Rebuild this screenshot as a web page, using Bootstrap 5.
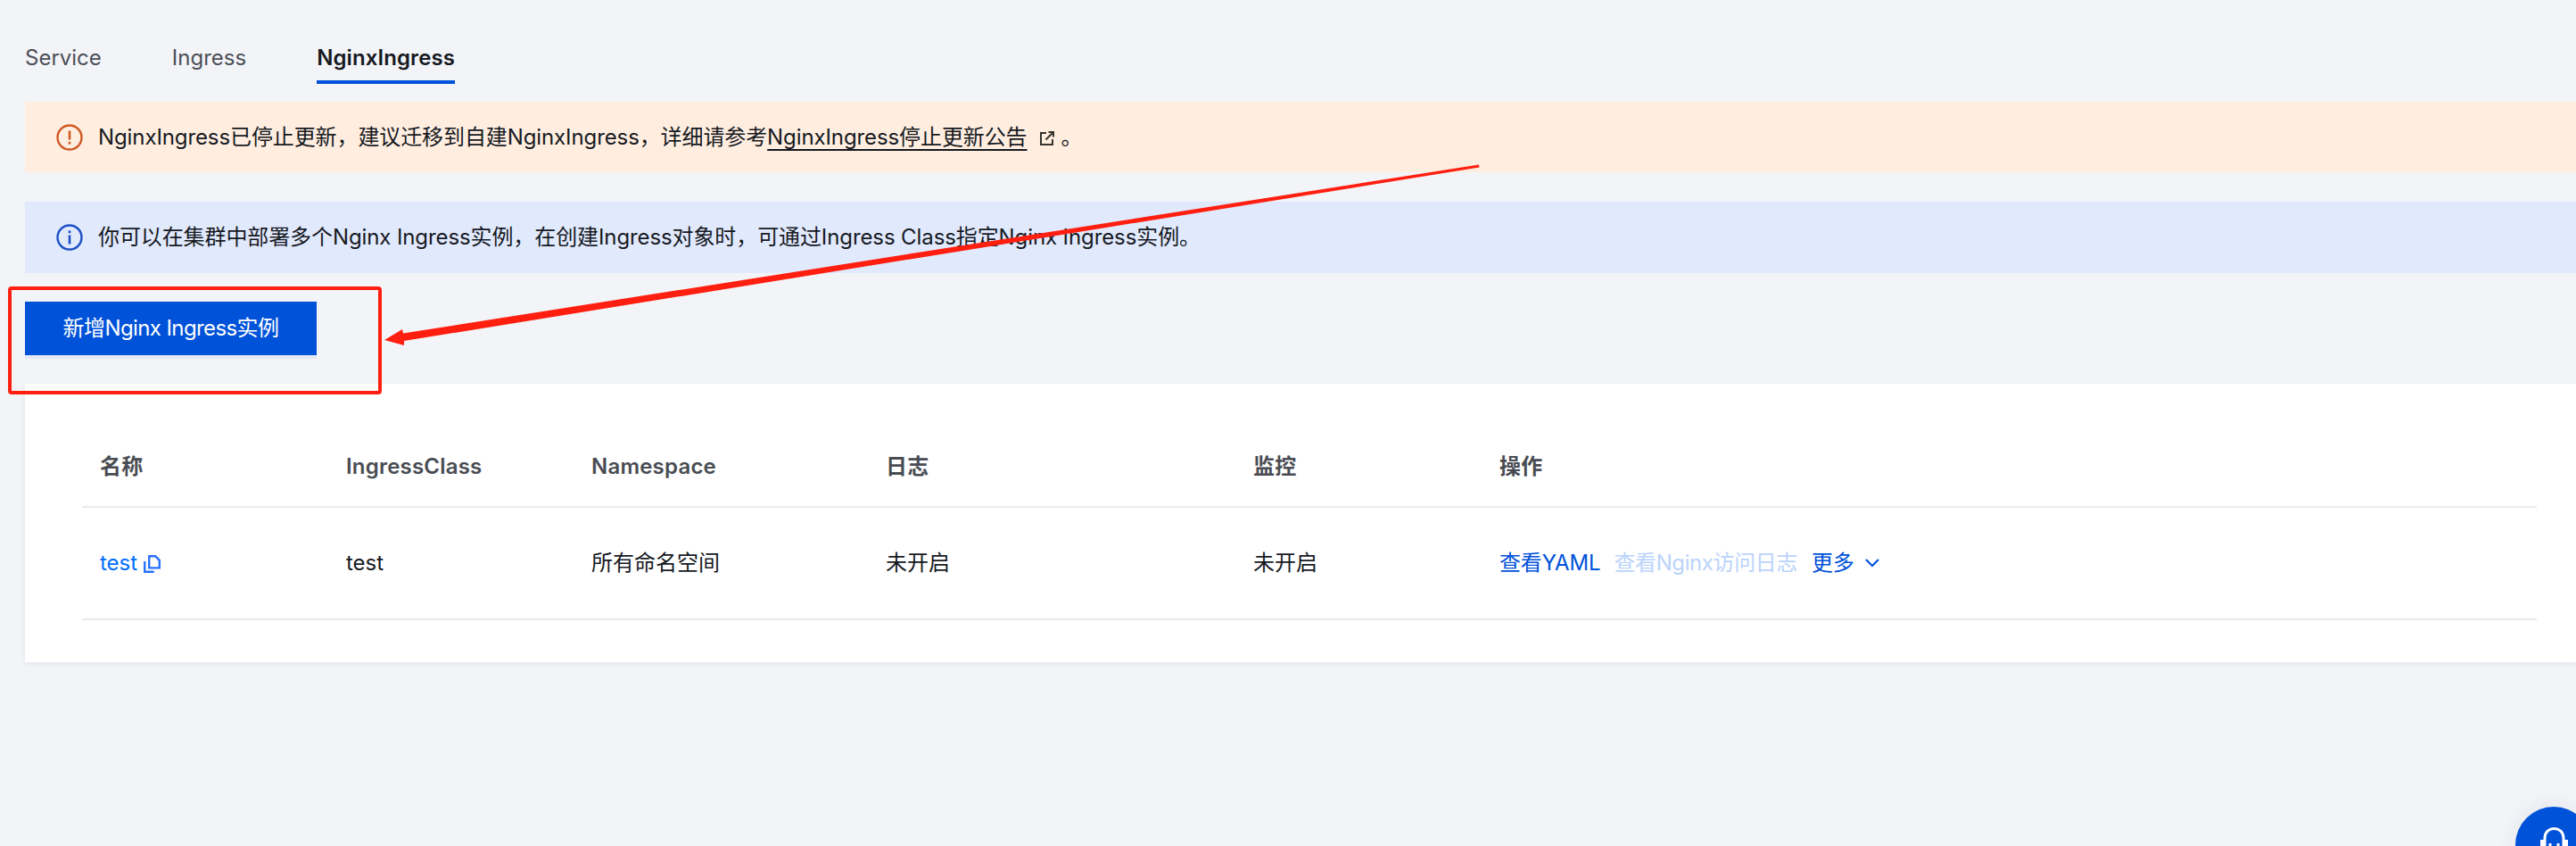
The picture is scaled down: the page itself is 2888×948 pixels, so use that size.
<!DOCTYPE html>
<html lang="zh-CN">
<head>
    <meta charset="UTF-8">
    <title>NginxIngress</title>
    <link rel="stylesheet" href="https://cdn.jsdelivr.net/npm/bootstrap@5.3.0/dist/css/bootstrap.min.css">
    <style>
        html, body { height: 948px; overflow: hidden; }
        body {
            background: #f3f4f8;
            color: #16191f;
            font-family: Inter, "Noto Sans CJK SC", sans-serif;
            font-size: 24px;
            line-height: 36px;
        }
        .page-wrap { padding: 40px 0 0 28px; }

        .tab-bar { gap: 79px; margin-bottom: 20px; }
        .tab-bar .nav-link {
            color: #4b4f57;
            padding: 15px 0 4px;
            height: 31px;
            line-height: 20px;
            font-size: 24px;
            box-sizing: content-box;
            border-bottom: 4px solid transparent;
        }
        .tab-bar .nav-link.active { color: #16191f; font-weight: 600; letter-spacing: .1px; border-bottom-color: #0052d9; }

        .notice {
            border: 0;
            border-radius: 0;
            margin: 0;
            padding: 0 0 0 35px;
            height: 80px;
            gap: 17px;
            color: #16191f;
            letter-spacing: -.1px;
        }
        .notice svg { flex: none; }
        .notice-warn { background: #ffeee0; margin-bottom: 33px; height: 79px; }
        .notice-info { background: #e1e9fd; margin-bottom: 32px; }
        .notice a { color: #16191f; text-underline-offset: 5px; text-decoration-skip-ink: none; }
        .ext-icon { margin: 0 8px 0 14px; }

        .add-btn {
            display: block;
            width: 327px;
            height: 60px;
            padding: 0;
            border: 0;
            border-radius: 0;
            background: #0052d9;
            color: #fff;
            font-size: 24px;
            letter-spacing: -.6px;
            box-shadow: 0 4px 0 #e3e8f5;
            margin-bottom: 32px;
        }

        .list-card {
            border: 0;
            border-radius: 0;
            background: #fff;
            height: 312px;
            padding: 49px 44px 0 64px;
            box-shadow: 0 2px 6px rgba(30, 40, 70, .07);
        }
        .list-table { table-layout: fixed; width: 100%; margin: 0; font-size: 24px; }
        .list-table > :not(caption) > * > * {
            padding: 0 20px;
            border-bottom: 2px solid #e9eaf0;
            box-shadow: none;
            vertical-align: middle;
            color: #16191f;
        }
        .list-table th { height: 89px; font-weight: 600; letter-spacing: .2px; color: #494c53 !important; }
        .list-table td { height: 126px; }
        .w-name { width: 276px; }
        .w-class { width: 275px; }
        .w-ns { width: 330px; }
        .w-log { width: 412px; }
        .w-mon { width: 276px; }
        .test-link { color: #006eff; text-decoration: none; }
        .op-links { gap: 17px; letter-spacing: -.15px; }
        .op-links .off { margin-left: -2px; margin-right: -1px; letter-spacing: -.4px; }
        .op-links a { color: #0052d9; text-decoration: none; }
        .op-links .off { color: #bbd3fb; }
        .more-arrow { margin-left: 4px; }

        .chat-fab {
            position: absolute;
            left: 2820px;
            top: 904px;
            width: 86px;
            height: 86px;
            border-radius: 50%;
            background: #0052d9;
            box-shadow: 0 0 24px rgba(30, 40, 70, .08);
        }
        .mark-layer { position: absolute; left: 0; top: 0; pointer-events: none; }
    </style>
</head>
<body>
<div class="page-wrap">
    <ul class="nav tab-bar">
        <li class="nav-item"><a class="nav-link" href="#">Service</a></li>
        <li class="nav-item"><a class="nav-link" href="#">Ingress</a></li>
        <li class="nav-item"><a class="nav-link active" href="#">NginxIngress</a></li>
    </ul>

    <div class="alert notice notice-warn d-flex align-items-center">
        <svg width="30" height="30" viewBox="0 0 30 30" fill="none">
            <circle cx="15" cy="15" r="13.5" stroke="#cf5a24" stroke-width="2.4"/>
            <path d="M15 7.5v10" stroke="#cf5a24" stroke-width="2.6"/>
            <path d="M15 19.8v2.8" stroke="#cf5a24" stroke-width="2.6"/>
        </svg>
        <div>NginxIngress已停止更新，建议迁移到自建NginxIngress，详细请参考<a href="#">NginxIngress停止更新公告</a><svg class="ext-icon" width="16" height="16" viewBox="0 0 16 16" fill="none" stroke="#36332f" stroke-width="2"><path d="M7 2H1v13h13V9"/><path d="M6.5 9.5 15 1M9.5 1H15v5.5"/></svg>。</div>
    </div>

    <div class="alert notice notice-info d-flex align-items-center">
        <svg width="30" height="30" viewBox="0 0 30 30" fill="none">
            <circle cx="15" cy="15" r="13.5" stroke="#1c4fc4" stroke-width="2.4"/>
            <path d="M15 7.4v2.8" stroke="#1c4fc4" stroke-width="2.6"/>
            <path d="M15 12.5v10" stroke="#1c4fc4" stroke-width="2.6"/>
        </svg>
        <div>你可以在集群中部署多个Nginx Ingress实例，在创建Ingress对象时，可通过Ingress Class指定Nginx Ingress实例。</div>
    </div>

    <button type="button" class="btn add-btn">新增Nginx Ingress实例</button>

    <div class="card list-card">
        <table class="table list-table">
            <colgroup>
                <col class="w-name"><col class="w-class"><col class="w-ns"><col class="w-log"><col class="w-mon"><col>
            </colgroup>
            <thead>
                <tr>
                    <th>名称</th>
                    <th>IngressClass</th>
                    <th>Namespace</th>
                    <th>日志</th>
                    <th>监控</th>
                    <th>操作</th>
                </tr>
            </thead>
            <tbody>
                <tr>
                    <td>
                        <a class="test-link" href="#">test</a>
                        <svg width="19" height="20" viewBox="0 0 19 20" fill="none" stroke="#2a72ff" stroke-width="2.4"><path d="M6.2 1.2h7l4.6 4.6v8.6H6.2z"/><path d="M1.2 7v11.8h10.6"/></svg>
                    </td>
                    <td>test</td>
                    <td>所有命名空间</td>
                    <td>未开启</td>
                    <td>未开启</td>
                    <td>
                        <div class="d-flex align-items-center op-links">
                            <a href="#">查看YAML</a>
                            <a class="off" href="#">查看Nginx访问日志</a>
                            <a class="d-flex align-items-center gap-2" href="#">更多
                                <svg class="more-arrow" width="16" height="10" viewBox="0 0 16 10" fill="none" stroke="#0052d9" stroke-width="2.2"><path d="M1 1l7 7 7-7"/></svg>
                            </a>
                        </div>
                    </td>
                </tr>
            </tbody>
        </table>
    </div>
</div>

<div class="chat-fab">
    <svg width="86" height="86" viewBox="0 0 86 86" fill="none" stroke="#fff" stroke-width="3">
        <path d="M33 44V35c0-14 21-14 21 0v9"/>
        <path d="M30 37v9M57 37v9" stroke-width="4"/>
        <path d="M39 41v3M48 41v3"/>
    </svg>
</div>

<svg class="mark-layer" width="2888" height="948" viewBox="0 0 2888 948" fill="#ff1f10">
    <rect x="11" y="323" width="415" height="117" rx="2" fill="none" stroke="#ff1f10" stroke-width="4"/>
    <polygon points="1658,184.5 1658.5,187.5 453,382 453,387 431,381 451,369 452,373.5"/>
</svg>
</body>
</html>
